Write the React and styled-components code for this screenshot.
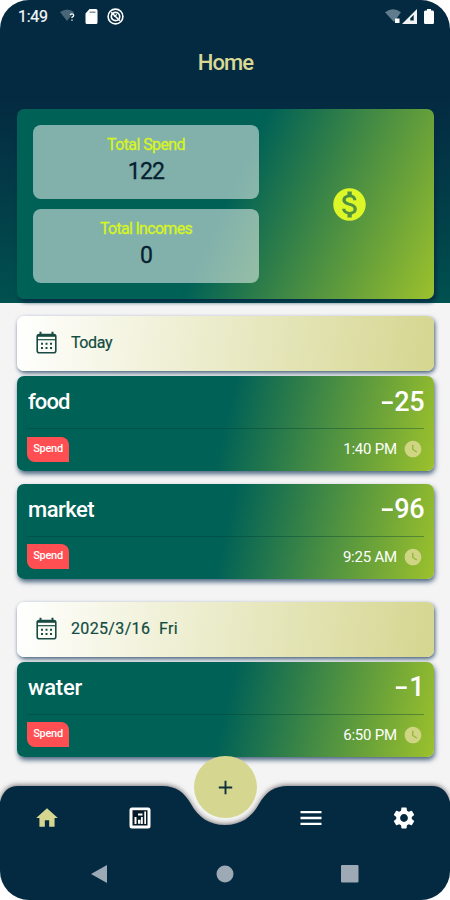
import React from "react";
import styled, { createGlobalStyle } from "styled-components";
import { MdHome, MdMenu, MdSettings, MdMonetizationOn, MdWatchLater, MdAdd } from "react-icons/md";

const GlobalStyle = createGlobalStyle`
  * { box-sizing: border-box; }
  body { margin: 0; background: #fff; }
`;

const navy = "#042a41";
const khaki = "#d5d68f";

const Phone = styled.div`
  display: flex;
  flex-direction: column;
  width: 450px;
  height: 900px;
  overflow: hidden;
  border-radius: 29px;
  background: #f4f4f5;
  font-family: Roboto, "Noto Sans", sans-serif;
`;

const Top = styled.header`
  flex: none;
  height: 303px;
  padding: 0 16px 0 17px;
  background: linear-gradient(${navy} 0, ${navy} 100px, #00514f 100%);
`;

const StatusBar = styled.div`
  display: flex;
  align-items: center;
  justify-content: space-between;
  height: 32px;
  margin-right: -1px;
`;

const StatusGroup = styled.div`
  display: flex;
  align-items: center;
  height: 32px;
`;

const StatusIcons = styled.div`
  display: flex;
  align-items: center;
  gap: 9px;
`;

const BatterySlot = styled.span`
  display: flex;
  margin-left: 7px;
  margin-right: 1px;
`;

const Clock = styled.span`
  width: 43px;
  padding-left: 1px;
  color: #f4f8fa;
  font-size: 16px;
  letter-spacing: -0.3px;
  -webkit-text-stroke: 0.2px #f4f8fa;
`;

const Title = styled.h1`
  margin: 0;
  height: 77px;
  padding-top: 17px;
  text-align: center;
  color: #d9d995;
  font-size: 22px;
  font-weight: 500;
  line-height: 28px;
  letter-spacing: -0.9px;
`;

const Summary = styled.section`
  display: flex;
  height: 190px;
  padding: 16px;
  border-radius: 7px;
  background: linear-gradient(114.5deg, #006156 0, #006156 50%, #9cc12c 100%);
  box-shadow: 2px 3px 4px #052b45;
`;

const Totals = styled.div`
  display: flex;
  flex-direction: column;
  gap: 10px;
  width: 226px;
`;

const TotalBox = styled.div`
  height: 74px;
  padding-top: 9px;
  border-radius: 8px;
  background: rgba(255, 255, 255, 0.51);
  text-align: center;
`;

const TotalLabel = styled.div`
  color: #d7f520;
  font-size: 16px;
  line-height: 21px;
  letter-spacing: ${(p) => p.$tracking};
  -webkit-text-stroke: 0.3px #d7f520;
`;

const TotalValue = styled.div`
  color: #06212f;
  font-size: 23px;
  line-height: 33px;
  letter-spacing: -0.7px;
  -webkit-text-stroke: 0.3px #06212f;
`;

const Coin = styled.div`
  display: flex;
  flex: 1;
  align-items: center;
  justify-content: center;
  padding-left: 21px;
  color: #dcf628;
`;

const Feed = styled.main`
  flex: 1;
  min-height: 0;
  padding: 13px 16px 0 17px;
`;

const Day = styled.section`
  display: flex;
  flex-direction: column;
  margin-bottom: 23px;
`;

const DayHeader = styled.div`
  display: flex;
  align-items: center;
  gap: 14px;
  height: 55px;
  margin-bottom: 5px;
  padding: 0 19px 2px;
  border-radius: 7px;
  background: linear-gradient(97.5deg, #fff, ${khaki});
  box-shadow: 1px 2px 4px rgba(4, 42, 80, 0.75);
  color: #114b42;
  font-size: 16px;
  letter-spacing: ${(p) => p.$tracking};
  white-space: pre;
  -webkit-text-stroke: 0.2px #114b42;
`;

const Entries = styled.div`
  display: flex;
  flex-direction: column;
  gap: 12.5px;
`;

const Entry = styled.article`
  height: 95px;
  padding: 0 10px;
  border-radius: 7px;
  background: linear-gradient(102.8deg, #006156 0, #006156 50%, #9cc12c 100%);
  box-shadow: 1px 3px 5px rgba(4, 42, 80, 0.7);
  color: #fff;
`;

const EntryMain = styled.div`
  display: flex;
  align-items: center;
  justify-content: space-between;
  height: 53px;
  padding-bottom: 1px;
  border-bottom: 1px solid rgba(0, 60, 50, 0.38);
`;

const Name = styled.span`
  padding-left: 1px;
  font-size: 22px;
  font-weight: 500;
  letter-spacing: ${(p) => p.$tracking};
`;

const Amount = styled.span`
  display: flex;
  align-items: center;
  font-size: 27px;
  font-weight: 500;
  letter-spacing: -0.5px;
`;

const Minus = styled.span`
  display: inline-block;
  transform: scaleX(1.55);
  transform-origin: right center;
  margin-right: 1px;
`;

const EntryMeta = styled.div`
  display: flex;
  align-items: center;
  justify-content: space-between;
  height: 40px;
`;

const Badge = styled.span`
  width: 42px;
  height: 25px;
  border-radius: 0 8px 0 8px;
  background: #ff4f52;
  font-size: 11px;
  font-weight: 500;
  line-height: 23px;
  text-align: center;
  letter-spacing: -0.3px;
`;

const Time = styled.span`
  display: flex;
  align-items: center;
  gap: 6px;
  padding-right: 1px;
  font-size: 15px;
  line-height: 18px;
  letter-spacing: -0.2px;

  svg { color: #d0d584; }
`;

const BottomArea = styled.footer`
  position: relative;
  flex: none;
  height: 114px;
`;

const BarShadow = styled.div`
  filter: drop-shadow(0 -1px 2.5px rgba(40, 30, 30, 0.6));
`;

const BarSurface = styled.div`
  height: 114px;
  background: ${navy};
  clip-path: path("M0 16 Q4 0 18 0 H162 C176 0 184 6 191 18 C198 31 209 39 225 39 C241 39 252 31 259 18 C266 6 274 0 288 0 H432 Q446 0 450 16 V114 H0 Z");
`;

const Tabs = styled.nav`
  display: grid;
  grid-template-columns: 93px 93px 78px 93px 93px;
  align-items: center;
  justify-items: center;
  height: 63px;
`;

const Tab = styled.span`
  display: flex;
  grid-column: ${(p) => p.$column};
  color: ${(p) => (p.$active ? khaki : "#fff")};
`;

const SystemKeys = styled.div`
  display: flex;
  justify-content: space-between;
  align-items: center;
  height: 50px;
  padding: 0 91px;
`;

const AddButton = styled.button`
  position: absolute;
  top: -30px;
  left: 194px;
  display: flex;
  align-items: center;
  justify-content: center;
  width: 63px;
  height: 62px;
  padding: 0;
  border: 0;
  border-radius: 50%;
  background: ${khaki};
  color: #102f3b;
`;

const CalendarIcon = () => (
  <svg width="21" height="23" viewBox="0 0 21 23" fill="none" stroke="#194b43">
    <rect x="1.2" y="3.5" width="18.6" height="18.3" rx="2" strokeWidth="1.6" />
    <path d="M1 4.8h19" strokeWidth="2" />
    <path d="M1 8.7h19" strokeWidth="1.2" />
    <path d="M4.5 0.8v4M16.5 0.8v4" strokeWidth="2" />
    <path d="M5 12.7h2M9.5 12.7h2M14 12.7h2M5 17h2M9.5 17h2M14 17h2" strokeWidth="2" />
  </svg>
);

const WifiUnknown = () => (
  <svg width="16" height="14" viewBox="0 0 16 14">
    <path d="M0 3Q7.5 -2 14 3L7 12Z" fill="#496679" />
    <path d="M10.3 6Q10.3 4.8 12 4.8T13.7 6.2Q13.7 7.3 12 8.2V9M12 10.4v1.4" fill="none" stroke="#fff" strokeWidth="1.3" />
  </svg>
);

const StorageCard = () => (
  <svg width="13" height="15" viewBox="0 0 13 15">
    <path d="M4.5 0H11a1.5 1.5 0 0 1 1.5 1.5v12A1.5 1.5 0 0 1 11 15H2a1.5 1.5 0 0 1-1.5-1.5V4.5Z" fill="#fff" />
    <path d="M4.5 3.2h6" stroke="#8797a0" strokeWidth="1.4" />
  </svg>
);

const Blocked = () => (
  <svg width="17" height="17" viewBox="0 0 17 17" fill="none" stroke="#fff">
    <circle cx="8.5" cy="8.5" r="7.4" strokeWidth="1.6" />
    <circle cx="8.5" cy="8.5" r="4.2" strokeWidth="1.7" />
    <path d="M4.2 4.2l8.6 8.6" strokeWidth="1.6" />
    <path d="M7 8.5l3-2" strokeWidth="1.2" />
  </svg>
);

const Wifi = () => (
  <svg width="17" height="15" viewBox="0 0 17 15">
    <path d="M0 3.2Q8 -2.5 16 3.2L9 13Z" fill="#607b8b" />
    <path d="M10 9.5h4.5v4.5h-4.5z" fill="#fff" />
  </svg>
);

const Signal = () => (
  <svg width="15" height="15" viewBox="0 0 15 15">
    <path d="M0 15L15 0V15Z" fill="#f1f3f5" />
    <path d="M8.3 11.5V9.5L11.7 5.7v5.8Z" fill={navy} />
  </svg>
);

const Battery = () => (
  <svg width="10" height="15" viewBox="0 0 10 15">
    <path d="M3 0h4v1.5h1.7Q10 1.5 10 3v10.5Q10 15 8.7 15H1.3Q0 15 0 13.5V3Q0 1.5 1.3 1.5H3Z" fill="#fff" />
  </svg>
);

const StatsIcon = () => (
  <svg width="22" height="22" viewBox="0 0 22 22">
    <rect x="0.5" y="0.5" width="21" height="21" rx="2.5" fill="#fff" />
    <rect x="3.5" y="3.2" width="15" height="15.3" fill="#071a29" />
    <path d="M5.5 10h2v7h-2zM9 6.5h4.5v2H9zM9 12.8h2.5v4H9zM12 10h1.8v7H12zM15.3 4.5h1.7v12.5h-1.7z" fill="#fff" />
  </svg>
);

const days = [
  {
    label: "Today", tracking: "-0.4px",
    entries: [
      { name: "food", tracking: "-0.9px", amount: 25, time: "1:40 PM" },
      { name: "market", tracking: "-0.5px", amount: 96, time: "9:25 AM" },
    ],
  },
  {
    label: "2025/3/16  Fri", tracking: "0.35px",
    entries: [{ name: "water", tracking: "-0.2px", amount: 1, time: "6:50 PM" }],
  },
];

export default function App() {
  return (
    <Phone>
      <GlobalStyle />
      <Top>
        <StatusBar>
          <StatusGroup>
            <Clock>1:49</Clock>
            <StatusIcons><WifiUnknown /><StorageCard /><Blocked /></StatusIcons>
          </StatusGroup>
          <StatusGroup>
            <Wifi /><Signal /><BatterySlot><Battery /></BatterySlot>
          </StatusGroup>
        </StatusBar>
        <Title>Home</Title>
        <Summary>
          <Totals>
            <TotalBox>
              <TotalLabel $tracking="-0.6px">Total Spend</TotalLabel>
              <TotalValue>122</TotalValue>
            </TotalBox>
            <TotalBox>
              <TotalLabel $tracking="-0.7px">Total Incomes</TotalLabel>
              <TotalValue>0</TotalValue>
            </TotalBox>
          </Totals>
          <Coin><MdMonetizationOn size={39} /></Coin>
        </Summary>
      </Top>
      <Feed>
        {days.map((day) => (
          <Day key={day.label}>
            <DayHeader $tracking={day.tracking}><CalendarIcon />{day.label}</DayHeader>
            <Entries>
              {day.entries.map((entry) => (
                <Entry key={entry.name}>
                  <EntryMain>
                    <Name $tracking={entry.tracking}>{entry.name}</Name>
                    <Amount><Minus>-</Minus>{entry.amount}</Amount>
                  </EntryMain>
                  <EntryMeta>
                    <Badge>Spend</Badge>
                    <Time>{entry.time}<MdWatchLater size={20} /></Time>
                  </EntryMeta>
                </Entry>
              ))}
            </Entries>
          </Day>
        ))}
      </Feed>
      <BottomArea>
        <BarShadow>
          <BarSurface>
            <Tabs>
              <Tab $column={1} $active><MdHome size={26} /></Tab>
              <Tab $column={2}><StatsIcon /></Tab>
              <Tab $column={4}><MdMenu size={28} /></Tab>
              <Tab $column={5}><MdSettings size={26} /></Tab>
            </Tabs>
            <SystemKeys>
              <svg width="17" height="20" viewBox="0 0 17 20"><path d="M0 10L16 1V19Z" fill="#9daab5" /></svg>
              <svg width="18" height="18" viewBox="0 0 18 18"><circle cx="9" cy="9" r="8.5" fill="#9daab5" /></svg>
              <svg width="18" height="18" viewBox="0 0 18 18"><rect width="17.5" height="17.5" rx="1" fill="#9daab5" /></svg>
            </SystemKeys>
          </BarSurface>
        </BarShadow>
        <AddButton aria-label="Add"><MdAdd size={23} /></AddButton>
      </BottomArea>
    </Phone>
  );
}
